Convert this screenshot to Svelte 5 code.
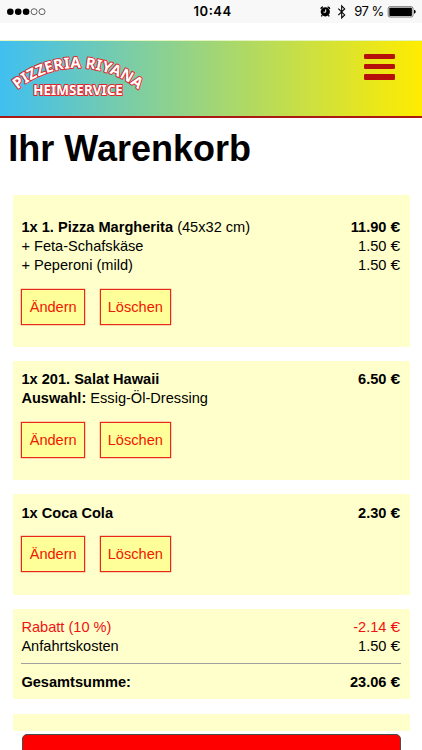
<script>
  const items = [
    {
      rows: [
        { bold: '1x 1. Pizza Margherita', text: ' (45x32 cm)', price: '11.90', strong: true },
        { text: '+ Feta-Schafskäse', price: '1.50' },
        { text: '+ Peperoni (mild)', price: '1.50' }
      ]
    },
    {
      rows: [
        { bold: '1x 201. Salat Hawaii', price: '6.50', strong: true },
        { bold: 'Auswahl:', text: ' Essig-Öl-Dressing' }
      ]
    },
    { rows: [{ bold: '1x Coca Cola', price: '2.30', strong: true }] }
  ];
</script>

{#snippet amount(value, strong)}
  <span class:strong>{value} <span class="euro">€</span></span>
{/snippet}

<div class="screen">
  <div class="status">
    <svg width="422" height="23" viewBox="0 0 422 23">
      <g fill="#000">
        <circle cx="10.3" cy="11.7" r="3.3" />
        <circle cx="18.2" cy="11.7" r="3.3" />
        <circle cx="26.1" cy="11.7" r="3.3" />
      </g>
      <g fill="none" stroke="#222" stroke-width=".7">
        <circle cx="34.1" cy="11.7" r="3" />
        <circle cx="42" cy="11.7" r="3" />
      </g>
      <text x="193.6" y="16.4" font-size="13" font-weight="600" textLength="37.5">10:44</text>
      <circle cx="325.3" cy="11.8" r="4.6" />
      <path d="M320.8 8.9a2.6 2.6 0 0 1 2.2-2M327.6 6.9a2.6 2.6 0 0 1 2.2 2M322.3 15.3l-1 1.1M328.3 15.3l1 1.1" fill="none" stroke="#000" stroke-width="1.4" />
      <path d="M325.7 9.4v2.8h-2.2" fill="none" stroke="#fff" stroke-width="1" />
      <path d="M338.3 8.6l6.4 6.3-3 3V5.9l3 3-6.4 6.2" fill="none" stroke="#000" stroke-width="1.1" />
      <text x="354.2" y="16.4" font-size="13" textLength="30">97 %</text>
      <rect x="388.2" y="6.7" width="24.8" height="10.3" rx="1.8" fill="#f8f8f8" stroke="#444" stroke-width=".7" />
      <rect x="389.3" y="7.7" width="22.6" height="8.3" rx=".8" />
      <path d="M414 9.8q1.8 .4 1.8 2t-1.8 2z" />
    </svg>
  </div>

  <header>
    <svg class="logo" width="150" height="76" viewBox="0 41 150 76">
      <path id="arch" d="M17.2 89.8A95 95 0 0 1 140 91" fill="none" />
      <g class="lettering">
        <text font-size="15"><textPath href="#arch" startOffset="0.5" textLength="130.5">PIZZERIA RIYANA</textPath></text>
        <text x="33.3" y="95" font-size="13.8" textLength="89.5" lengthAdjust="spacingAndGlyphs">HEIMSERVICE</text>
      </g>
    </svg>
    <button class="menu" aria-label="Menü"><span></span><span></span><span></span></button>
  </header>

  <h1>Ihr Warenkorb</h1>

  <main>
    {#each items as item, i}
      <section class="card" class:first={i === 0}>
        {#each item.rows as row}
          <div class="row">
            <span>{#if row.bold}<b>{row.bold}</b>{/if}{row.text ?? ''}</span>
            {#if row.price}{@render amount(row.price, row.strong)}{/if}
          </div>
        {/each}
        <div class="actions">
          <button class="edit">Ändern</button>
          <button class="delete">Löschen</button>
        </div>
      </section>
    {/each}

    <section class="card totals">
      <div class="row discount"><span>Rabatt (10 %)</span>{@render amount('-2.14', false)}</div>
      <div class="row"><span>Anfahrtskosten</span>{@render amount('1.50', false)}</div>
      <div class="rule"></div>
      <div class="row strong"><span>Gesamtsumme:</span>{@render amount('23.06', true)}</div>
    </section>

    <section class="card stub"></section>
  </main>
  <div class="order"></div>
</div>

<style>
  :global(body) { margin: 0; background: #fff; }
  .screen {
    width: 422px;
    height: 750px;
    overflow: hidden;
    box-sizing: border-box;
    background: #fff;
    color: #000;
    font-family: "Liberation Sans", Arial, sans-serif;
  }
  .status { height: 23px; background: #f8f8f8; margin-bottom: 17px; }
  .status svg { display: block; font-family: Inter, sans-serif; }
  header {
    height: 78px;
    box-sizing: border-box;
    border-top: 1px solid #e5f5c0;
    border-bottom: 2px solid #a91b12;
    background: linear-gradient(90deg, #40bff0, #ffec00);
    display: flex;
    justify-content: space-between;
  }
  .logo { display: block; }
  .lettering text {
    font-family: "Noto Sans", "Open Sans", sans-serif;
    font-weight: 700;
    fill: #fff;
    stroke: #e0262c;
    stroke-width: 2px;
    stroke-linejoin: round;
    paint-order: stroke;
  }
  .menu {
    display: flex;
    flex-direction: column;
    gap: 5px;
    width: 31px;
    margin: 12.7px 27px 0 0;
    padding: 0;
    border: 0;
    background: none;
    height: 27px;
  }
  .menu span { display: block; width: 31px; height: 5.4px; background: #b51009; border-radius: 1.3px; }
  h1 {
    margin: 10px 0 0 8.3px;
    height: 66.7px;
    line-height: 42px;
    font-size: 36px;
    letter-spacing: 0;
    white-space: nowrap;
  }
  main {
    display: flex;
    flex-direction: column;
    gap: 14px;
    padding: 0 12.5px 0 13px;
    font-size: 14.6px;
    line-height: 19.2px;
  }
  .card { background: #ffffcc; padding: 9.2px 9px 22.2px 8.4px; }
  .first { padding-top: 23px; }
  .row { display: flex; justify-content: space-between; white-space: pre; height: 19.2px; }
  .euro { display: inline-block; margin-left: 1.9px; transform: scaleX(1.2); transform-origin: 100% 50%; }
  .strong { font-weight: 700; }
  .discount { color: #f01212; }
  .actions { display: flex; gap: 14.8px; margin-top: 13.6px; }
  .actions button {
    box-sizing: border-box;
    height: 36px;
    padding: 0;
    border: 1px solid #e8281c;
    background: #ffff99;
    color: #f01800;
    font: inherit;
    line-height: 34px;
    box-shadow: 0 0 0 .4px #e8281c80;
  }
  .edit { width: 63.6px; }
  .delete { width: 71px; }
  .totals { padding-bottom: 7px; }
  .rule { height: 1px; margin: 6.5px 0 9.2px; background: #a0a0a0; }
  .stub { height: 17px; padding: 0; margin-top: .8px; }
  .order {
    margin: 3px 21px 0 21.5px;
    height: 40px;
    box-sizing: border-box;
    border: 1px solid #46504c;
    border-radius: 5px;
    background: #f00;
  }
</style>
